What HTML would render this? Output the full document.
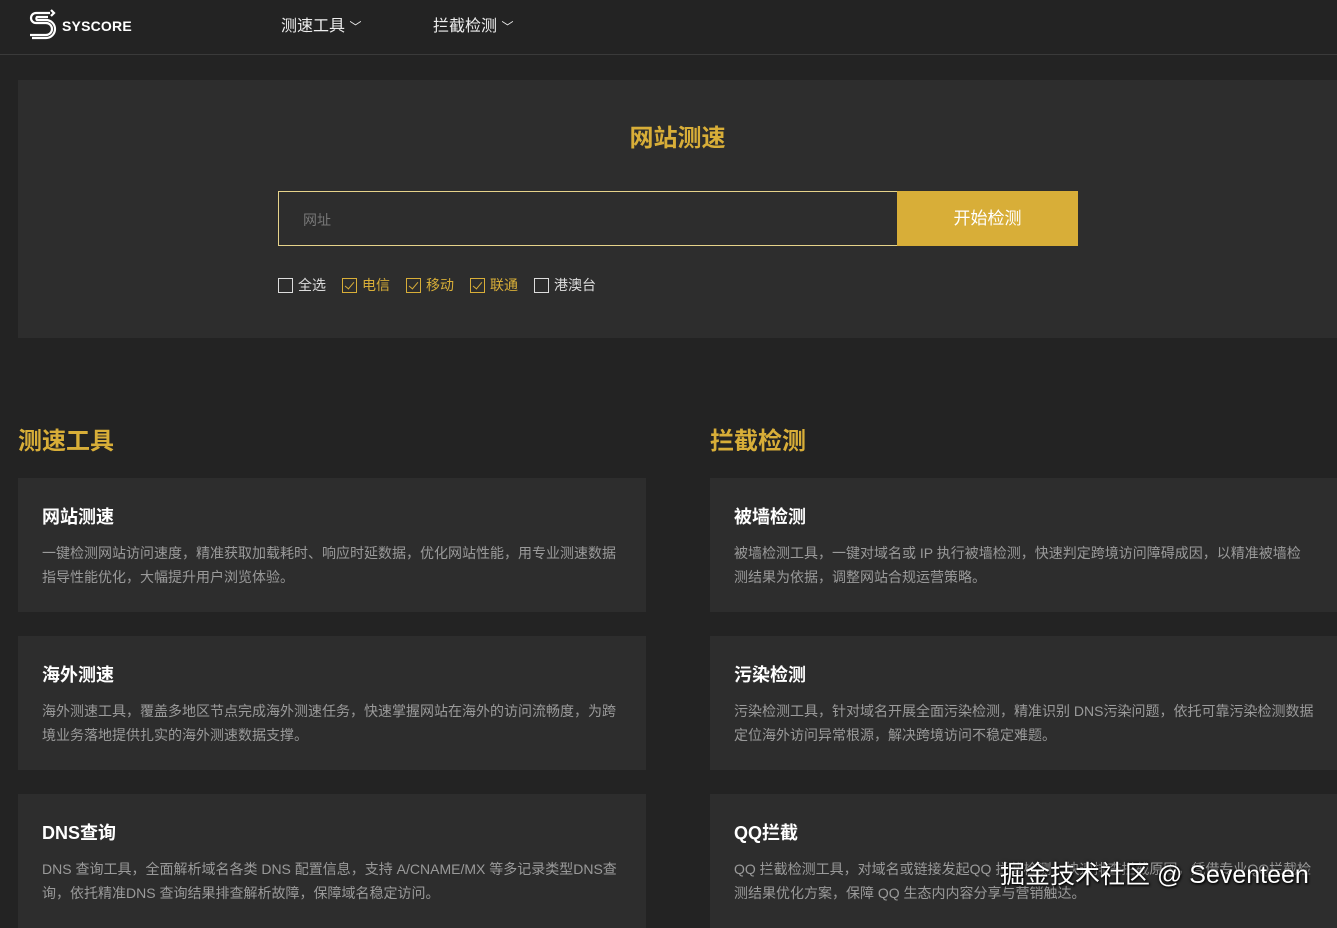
<!DOCTYPE html>
<html><head><meta charset="utf-8"><style>
*{margin:0;padding:0;box-sizing:border-box}
body{width:1337px;height:911px;overflow:hidden;background:#232323;font-family:"Liberation Sans","Noto Sans CJK SC",sans-serif;color:#fff;position:relative}
.hdr{height:55px;border-bottom:1px solid #3a3a3a;position:relative}
.logo{position:absolute;left:26px;top:8px}
.brand{position:absolute;left:62px;top:18px;font-weight:bold;font-size:14px;letter-spacing:.2px}
.nav{position:absolute;top:12px;font-size:16px;color:#eee}
.panel{position:absolute;left:18px;top:80px;width:1319px;height:258px;background:#2d2d2d}
.ttl{position:absolute;top:118px;left:0;width:1355px;text-align:center;color:#d8ae38;font-size:24px;font-weight:bold}
.inp{position:absolute;left:278px;top:191px;width:620px;height:55px;border:1px solid #e6d38a;background:#2d2d2d;color:#777;font-size:14px;padding:18px 24px}
.btn{position:absolute;left:897px;top:191px;width:181px;height:55px;background:#d8ae38;color:#fff;font-size:17px;text-align:center;line-height:56px}
.cb{position:absolute;top:275px;font-size:14px;color:#ddd;display:flex;align-items:center}
.cb i{display:inline-block;width:15px;height:15px;border:1px solid #ddd;margin-right:5px;position:relative}
.cb.on{color:#d8ae38}.cb.on i{border-color:#d8ae38}
.cb.on i:after{content:"";position:absolute;left:4px;top:1px;width:4px;height:8px;border:solid #d8ae38;border-width:0 1px 1px 0;transform:rotate(40deg)}
.sec{position:absolute;top:421px;color:#d8ae38;font-size:24px;font-weight:bold}
.card{position:absolute;width:628px;height:134px;background:#2d2d2d;padding:25px 0 0 24px}
.card h3{font-size:18px;margin-bottom:12px}
.card p{font-size:14px;color:#9a9a9a;line-height:24px;width:580px}
.wm{position:absolute;left:1000px;top:855px;font-size:25px;color:#fff;text-shadow:0 0 3px #000,1px 1px 2px #000}
</style></head><body>
<div class="hdr">
<svg class="logo" width="32" height="34" viewBox="0 0 32 34" fill="none" stroke="#fff" stroke-width="2.2"><path d="M24 5H10a5 5 0 0 0 0 10h10a6 6 0 0 1 0 12H4"/><path d="M22 9H11a2 2 0 0 0 0 3h9a9 9 0 0 1 0 18H6"/><path d="M25 2l3 3-3 3"/></svg>
<div class="brand">SYSCORE</div>
<div class="nav" style="left:281px">测速工具 <span style="font-size:12px">﹀</span></div>
<div class="nav" style="left:433px">拦截检测 <span style="font-size:12px">﹀</span></div>
</div>
<div class="panel"></div>
<div class="ttl">网站测速</div>
<div class="inp">网址</div>
<div class="btn">开始检测</div>
<div class="cb" style="left:278px"><i></i>全选</div>
<div class="cb on" style="left:342px"><i></i>电信</div>
<div class="cb on" style="left:406px"><i></i>移动</div>
<div class="cb on" style="left:470px"><i></i>联通</div>
<div class="cb" style="left:534px"><i></i>港澳台</div>
<div class="sec" style="left:18px">测速工具</div>
<div class="sec" style="left:710px">拦截检测</div>
<div class="card" style="left:18px;top:478px"><h3>网站测速</h3><p>一键检测网站访问速度，精准获取加载耗时、响应时延数据，优化网站性能，用专业测速数据指导性能优化，大幅提升用户浏览体验。</p></div>
<div class="card" style="left:18px;top:636px"><h3>海外测速</h3><p>海外测速工具，覆盖多地区节点完成海外测速任务，快速掌握网站在海外的访问流畅度，为跨境业务落地提供扎实的海外测速数据支撑。</p></div>
<div class="card" style="left:18px;top:794px"><h3>DNS查询</h3><p>DNS 查询工具，全面解析域名各类 DNS 配置信息，支持 A/CNAME/MX 等多记录类型DNS查询，依托精准DNS 查询结果排查解析故障，保障域名稳定访问。</p></div>
<div class="card" style="left:710px;top:478px"><h3>被墙检测</h3><p>被墙检测工具，一键对域名或 IP 执行被墙检测，快速判定跨境访问障碍成因，以精准被墙检测结果为依据，调整网站合规运营策略。</p></div>
<div class="card" style="left:710px;top:636px"><h3>污染检测</h3><p>污染检测工具，针对域名开展全面污染检测，精准识别 DNS污染问题，依托可靠污染检测数据定位海外访问异常根源，解决跨境访问不稳定难题。</p></div>
<div class="card" style="left:710px;top:794px"><h3>QQ拦截</h3><p>QQ 拦截检测工具，对域名或链接发起QQ 拦截检测，快速排查拦截原因，凭借专业QQ拦截检测结果优化方案，保障 QQ 生态内内容分享与营销触达。</p></div>
<div class="wm">掘金技术社区 @ Seventeen</div>
</body></html>
